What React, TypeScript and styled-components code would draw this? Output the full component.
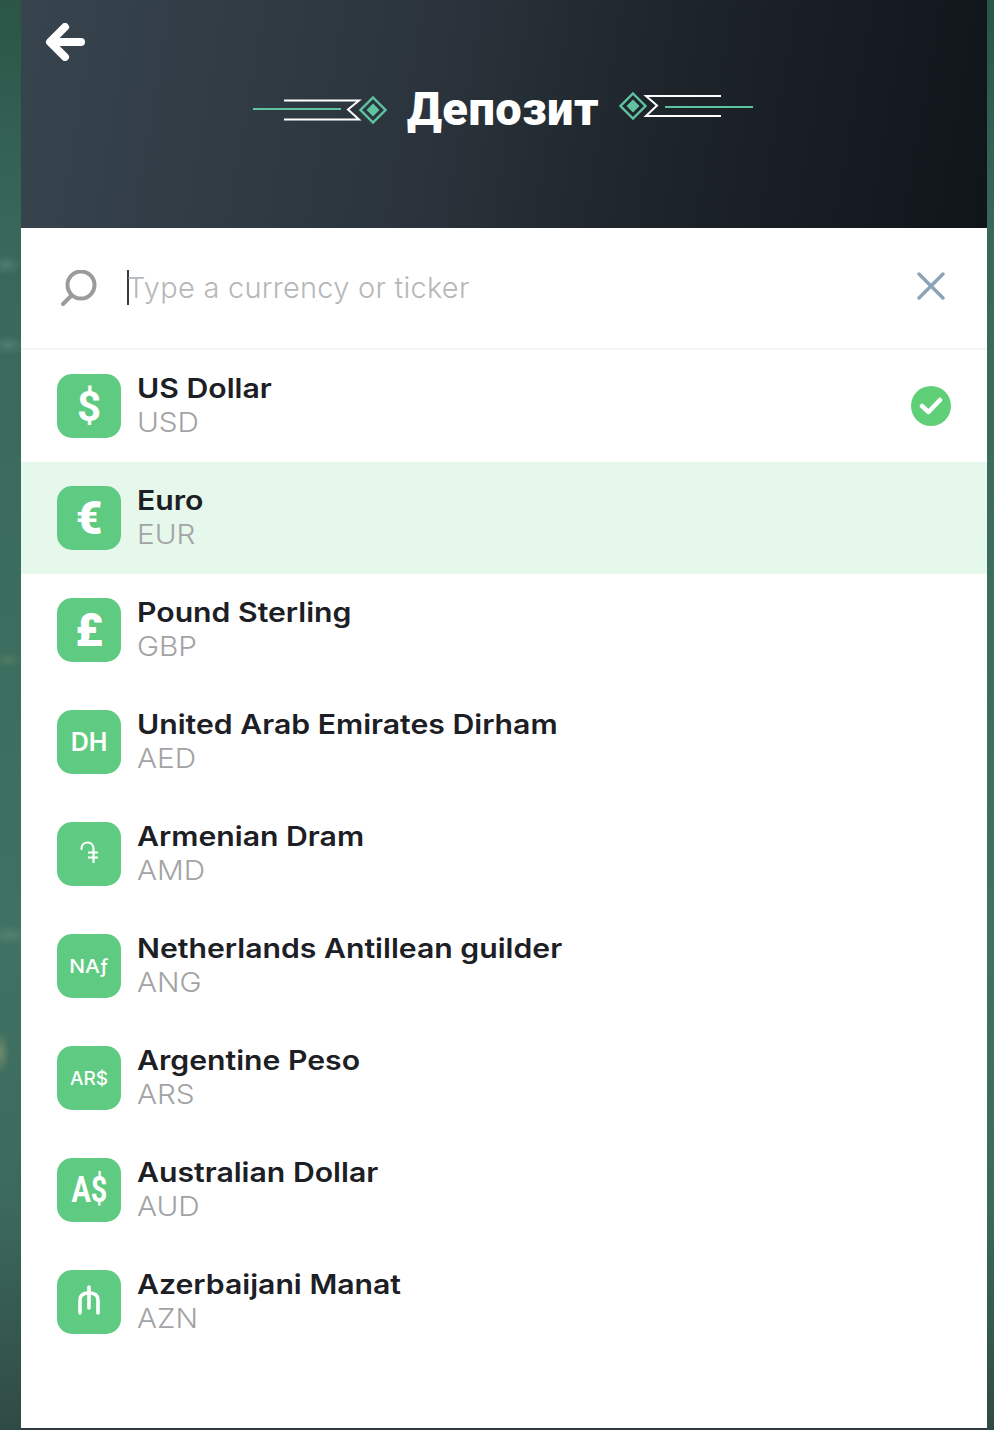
import styled, { createGlobalStyle } from 'styled-components';
import type { ReactNode } from 'react';

const GlobalStyle = createGlobalStyle`
  html, body {
    margin: 0;
    padding: 0;
    background: #3a6a5c;
  }
  * {
    box-sizing: border-box;
  }
`
const Page = styled.div`
  width: 994px;
  height: 1430px;
  overflow: hidden;
  padding: 0 7px 0 21px;
  background:
    radial-gradient(ellipse 16px 10px at 6px 265px, #4f7d70, transparent),
    radial-gradient(ellipse 18px 10px at 8px 345px, #4f7d70, transparent),
    radial-gradient(ellipse 14px 8px at 8px 660px, #527a62, transparent),
    radial-gradient(ellipse 20px 10px at 10px 935px, #55806f, transparent),
    radial-gradient(ellipse 10px 22px at 0 1053px, #6f8a68, transparent),
    linear-gradient(180deg, #2a5547 0, #38685a 230px, #3f7263 950px, #3c6a5c 1200px, #2f4a44 1430px);
`
const Panel = styled.main`
  height: 1430px;
  display: flex;
  flex-direction: column;
  background: #fff;
  border-bottom: 2px solid #2f3a42;
  font-family: Inter, "Liberation Sans", sans-serif;
`
const Header = styled.header`
  height: 228px;
  flex: none;
  padding: 23px 0 0 24px;
  background: linear-gradient(100deg, #37444e 0%, #2b343c 42%, #1c2329 68%, #10151a 100%);
`
const BackButton = styled.button`
  display: block;
  width: 40px;
  height: 38px;
  padding: 0;
  border: 0;
  background: none;
  cursor: pointer;
`
const TitleRow = styled.div`
  margin: 21px 0 0 -26px;
  display: flex;
  align-items: center;
  justify-content: center;
  gap: 20px;
  height: 54px;
`
const Title = styled.h1`
  margin: 0;
  color: #fff;
  font-family: Roboto, "Liberation Sans", sans-serif;
  font-weight: 900;
  font-size: 47px;
  line-height: 54px;
  letter-spacing: 0.5px;
  white-space: nowrap;
`
const Ornament = styled.svg<{ $up?: boolean }>`
  display: block;
  flex: none;
  margin-top: ${(p) => (p.$up ? '-6px' : '2px')};
`
const SearchBar = styled.div`
  height: 122px;
  flex: none;
  display: flex;
  align-items: center;
  padding: 0 42px 4px 40px;
  border-bottom: 2px solid #f1f5f5;
`
const SearchIcon = styled.svg`
  flex: none;
  margin-top: 4px;
`
const SearchInput = styled.input`
  flex: 1;
  min-width: 0;
  margin-left: -2px;
  border: 0;
  outline: 0;
  padding: 2px 0 0;
  background: none;
  font-family: Inter, "Liberation Sans", sans-serif;
  font-weight: 300;
  font-size: 29px;
  letter-spacing: 0.25px;
  color: #222;
  &::placeholder {
    color: #b6b8b8;
    opacity: 1;
  }
`
const Caret = styled.span`
  width: 2px;
  height: 35px;
  margin: 3px 0 0 30px;
  background: #333c44;
  flex: none;
`
const List = styled.ul`
  margin: 0;
  padding: 0;
  list-style: none;
`
const Row = styled.li<{ $active?: boolean }>`
  height: 112px;
  display: flex;
  align-items: center;
  padding: 0 36px;
  background: ${(p) => (p.$active ? '#e6f7ec' : 'transparent')};
`
const CurrencyIcon = styled.div<{ $size: number; $weight?: number; $squeeze?: number; $font?: string }>`
  width: 64px;
  height: 64px;
  flex: none;
  border-radius: 15px;
  background: #5fcb82;
  color: #fff;
  display: flex;
  align-items: center;
  justify-content: center;
  font-family: ${(p) => p.$font ?? 'Roboto'}, "Liberation Sans", sans-serif;
  font-size: ${(p) => p.$size}px;
  font-weight: ${(p) => p.$weight ?? 500};
  span {
    display: block;
    transform: scaleX(${(p) => p.$squeeze ?? 1});
  }
`
const Labels = styled.div`
  flex: 1;
  margin-left: 16px;
  display: flex;
  flex-direction: column;
`
// Inter stretched a bit, the reference font is wider
const Name = styled.div`
  color: #1c2025;
  font-size: 27px;
  font-weight: 600;
  line-height: 34px;
  white-space: nowrap;
  transform: scaleX(1.118);
  transform-origin: left center;
`
const Code = styled.div`
  color: #a2a3a4;
  font-size: 27px;
  font-weight: 300;
  line-height: 34px;
  transform: scaleX(1.1);
  transform-origin: left center;
`
const Selected = styled.div`
  width: 40px;
  height: 40px;
  flex: none;
  border-radius: 50%;
  background: #5fcf78;
  display: flex;
  align-items: center;
  justify-content: center;
`

type Currency = {
  name: string
  code: string
  icon: ReactNode
  size: number
  weight?: number
  squeeze?: number
  font?: string
}

const DramIcon = () => (
  <svg width="18" height="22" viewBox="0 0 18 22" fill="none" stroke="#fff" strokeWidth="2.2" strokeLinecap="round">
    <path d="M1.5 8 C1.5 4 4 1.5 7.5 1.5 C11 1.5 13.5 4 13.5 8 V21" />
    <path d="M8 11.5 H18 M8 16.5 H18" strokeLinecap="butt" />
  </svg>
)

const ManatIcon = () => (
  <svg width="22" height="30" viewBox="0 0 22 30" fill="none" stroke="#fff" strokeWidth="3.6" strokeLinecap="round">
    <path d="M2 28 V15 C2 10 6 8 11 8 C16 8 20 10 20 15 V28" />
    <path d="M11 2 V23" />
  </svg>
)

const currencies: Currency[] = [
  { name: 'US Dollar', code: 'USD', icon: '$', size: 42, weight: 700 },
  { name: 'Euro', code: 'EUR', icon: '€', size: 46, weight: 900 },
  { name: 'Pound Sterling', code: 'GBP', icon: '£', size: 46, weight: 900 },
  { name: 'United Arab Emirates Dirham', code: 'AED', icon: 'DH', size: 25, weight: 600, font: 'Inter' },
  { name: 'Armenian Dram', code: 'AMD', icon: <DramIcon />, size: 20 },
  { name: 'Netherlands Antillean guilder', code: 'ANG', icon: 'NAƒ', size: 19, weight: 500, squeeze: 1.1, font: 'Inter' },
  { name: 'Argentine Peso', code: 'ARS', icon: 'AR$', size: 19, weight: 500, font: 'Inter' },
  { name: 'Australian Dollar', code: 'AUD', icon: 'A$', size: 36, weight: 700, squeeze: 0.8 },
  { name: 'Azerbaijani Manat', code: 'AZN', icon: <ManatIcon />, size: 20 },
]

const App = () => {
  return (
    <>
      <GlobalStyle />
      <Page>
        <Panel>
          <Header>
            <BackButton aria-label="Back">
              <svg width="40" height="38" viewBox="0 0 40 38" fill="none" stroke="#fff" strokeWidth="8" strokeLinecap="round" strokeLinejoin="round">
                <path d="M20 4 L5 19 L20 34" />
                <path d="M6 19 H36" />
              </svg>
            </BackButton>
            <TitleRow>
              <Ornament width="134" height="28" viewBox="0 0 134 28" fill="none">
                <path d="M31 4.5 H106 L95 13.5 L106 23.5 H31" stroke="#fff" strokeWidth="2" />
                <path d="M0 13 H88" stroke="#5fc3a0" strokeWidth="2" />
                <path d="M120 1.5 L132.5 14 L120 26.5 L107.5 14 Z" stroke="#5fc3a0" strokeWidth="2.4" />
                <path d="M120 7.5 L126.5 14 L120 20.5 L113.5 14 Z" fill="#5fc3a0" />
              </Ornament>
              <Title>Депозит</Title>
              <Ornament $up width="134" height="28" viewBox="0 0 134 28" fill="none">
                <path d="M102 4 H27 L38 13.5 L27 24 H102" stroke="#fff" strokeWidth="2" />
                <path d="M46 15 H134" stroke="#5fc3a0" strokeWidth="2" />
                <path d="M14 1.5 L26.5 14 L14 26.5 L1.5 14 Z" stroke="#5fc3a0" strokeWidth="2.4" />
                <path d="M14 7.5 L20.5 14 L14 20.5 L7.5 14 Z" fill="#5fc3a0" />
              </Ornament>
            </TitleRow>
          </Header>
          <SearchBar>
            <SearchIcon width="36" height="36" viewBox="0 0 36 36" fill="none" stroke="#9b9b9b" strokeLinecap="round">
              <circle cx="20" cy="15" r="13.5" strokeWidth="4" />
              <path d="M10 26 L2 34" strokeWidth="4" />
            </SearchIcon>
            <Caret />
            <SearchInput placeholder="Type a currency or ticker" />
            <svg width="28" height="28" viewBox="0 0 28 28" fill="none" stroke="#8aa3b6" strokeWidth="3.4" strokeLinecap="round">
              <path d="M2 2 L26 26 M26 2 L2 26" />
            </svg>
          </SearchBar>
          <List>
            {currencies.map((c, i) => (
              <Row key={c.code} $active={c.code === 'EUR'}>
                <CurrencyIcon $size={c.size} $weight={c.weight} $squeeze={c.squeeze} $font={c.font}>
                  <span>{c.icon}</span>
                </CurrencyIcon>
                <Labels>
                  <Name>{c.name}</Name>
                  <Code>{c.code}</Code>
                </Labels>
                {i === 0 && (
                  <Selected>
                    <svg width="24" height="20" viewBox="0 0 24 20" fill="none" stroke="#fff" strokeWidth="4.5" strokeLinecap="round" strokeLinejoin="round">
                      <path d="M3 10 L9.5 16 L21 4" />
                    </svg>
                  </Selected>
                )}
              </Row>
            ))}
          </List>
        </Panel>
      </Page>
    </>
  )
}

export default App
